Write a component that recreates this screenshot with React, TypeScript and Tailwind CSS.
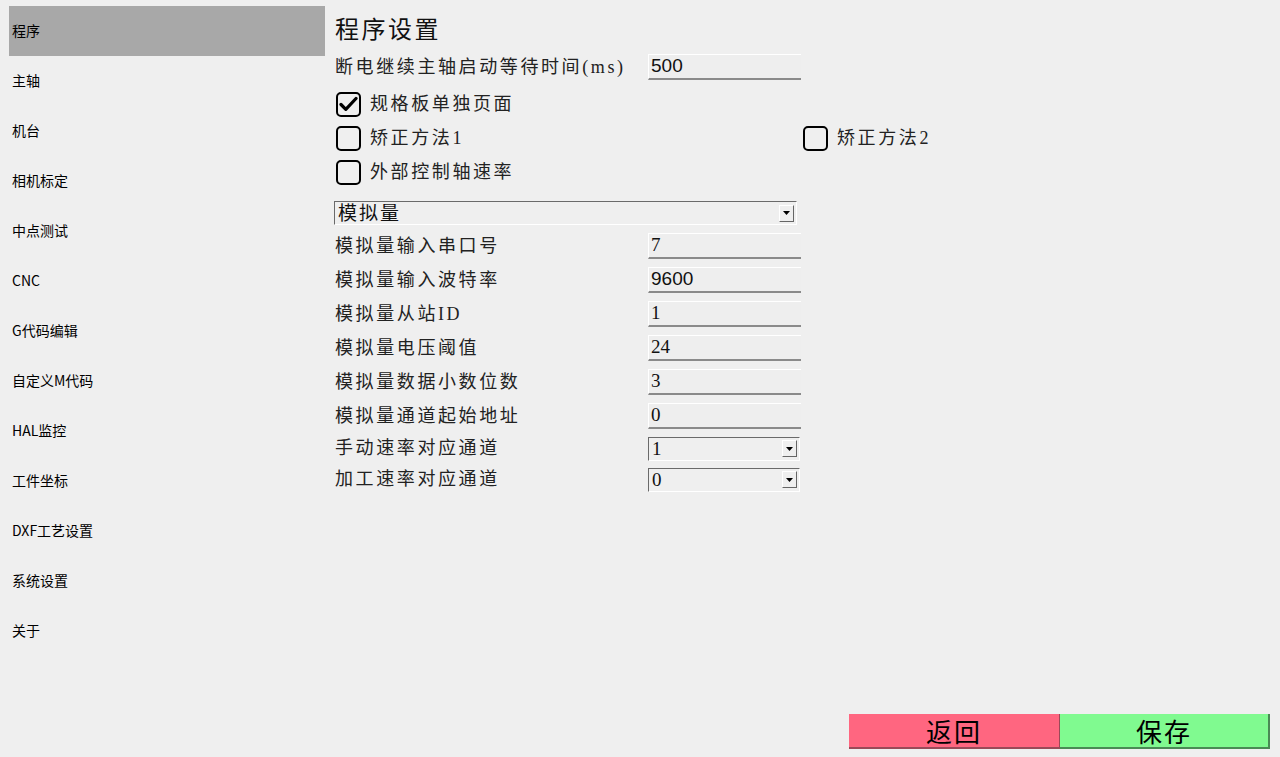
import React from 'react';

const NAV = [
  '程序',
  '主轴',
  '机台',
  '相机标定',
  '中点测试',
  'CNC',
  'G代码编辑',
  '自定义M代码',
  'HAL监控',
  '工件坐标',
  'DXF工艺设置',
  '系统设置',
  '关于',
];

const FIELDS: { label: string; value: string; sans?: boolean }[] = [
  { label: '模拟量输入串口号', value: '7' },
  { label: '模拟量输入波特率', value: '9600', sans: true },
  { label: '模拟量从站ID', value: '1' },
  { label: '模拟量电压阈值', value: '24' },
  { label: '模拟量数据小数位数', value: '3' },
  { label: '模拟量通道起始地址', value: '0' },
];

const serif = "font-['Liberation_Serif','Noto_Sans_CJK_SC',serif]";

function TextBox({ value, sans }: { value: string; sans?: boolean }) {
  return (
    <div
      className={`flex h-[26px] w-[153px] items-center border-t border-l border-t-white border-l-white border-b-2 border-b-[#8a8a8a] bg-[#eeeeee] pl-[2px] text-[19px] text-[#111] ${sans ? "font-['Liberation_Sans',sans-serif]" : ''}`}
    >
      {value}
    </div>
  );
}

function Arrow() {
  return (
    <div className="flex h-[17px] w-[15px] items-center justify-center border border-t-white border-l-white border-b-[#666] border-r-[#666] bg-[#efefef]">
      <svg width="7" height="4" viewBox="0 0 7 4">
        <path d="M0 0h7L3.5 4z" fill="#000" />
      </svg>
    </div>
  );
}

function Combo({ value, width }: { value: string; width: string }) {
  return (
    <div
      className={`flex h-[24px] ${width} items-center justify-between border border-t-[#6a6a6a] border-l-[#6a6a6a] border-b-white border-r-white bg-[#efefef] pl-[3px] pr-[2px] text-[19px] tracking-[2px] text-[#111]`}
    >
      <span className="leading-none">{value}</span>
      <Arrow />
    </div>
  );
}

function Check({ checked, label }: { checked?: boolean; label: string }) {
  return (
    <div className="flex items-center gap-[9px]">
      <div className="flex h-[25px] w-[25px] items-center justify-center rounded-[5px] border-2 border-black bg-[#efefef]">
        {checked && (
          <svg width="19" height="16" viewBox="0 0 19 16">
            <path d="M2 8.5l4.8 4.8L17 2.5" fill="none" stroke="#000" strokeWidth="3.2" strokeLinecap="round" strokeLinejoin="round" />
          </svg>
        )}
      </div>
      <span className="text-[18px] tracking-[2.6px] text-[#222]">{label}</span>
    </div>
  );
}

export default function App() {
  return (
    <div className="flex h-[757px] w-[1280px] overflow-hidden bg-[#efefef]">
      {/* Side nav */}
      <div className="ml-[9px] mt-[6px] w-[316px] font-['Noto_Sans_CJK_SC',sans-serif]">
        {NAV.map((item, i) => (
          <div
            key={item}
            className={`flex h-[50px] items-center pl-[3px] pb-[1px] text-[14px] text-black ${i === 0 ? 'bg-[#a8a8a8]' : ''}`}
          >
            {item}
          </div>
        ))}
      </div>

      {/* Main */}
      <div className={`ml-[10px] mt-[8px] flex flex-1 flex-col pr-[10px] ${serif}`}>
        <div className="flex h-[42px] items-center pt-[2px] text-[24px] tracking-[2.5px] text-[#111]">程序设置</div>

        <div className="flex h-[34px] items-center">
          <span className="w-[313px] text-[18px] tracking-[2.6px] text-[#222]">断电继续主轴启动等待时间(ms)</span>
          <TextBox value="500" sans />
        </div>

        <div className="mt-[3px] flex h-[34px] items-center pl-[1px]">
          <Check checked label="规格板单独页面" />
        </div>
        <div className="flex h-[34px] items-center pl-[1px]">
          <div className="w-[467px]">
            <Check label="矫正方法1" />
          </div>
          <Check label="矫正方法2" />
        </div>
        <div className="flex h-[34px] items-center pl-[1px]">
          <Check label="外部控制轴速率" />
        </div>

        <div className="mt-[12px] -ml-[1px] mb-[4px]">
          <Combo value="模拟量" width="w-[463px]" />
        </div>

        {FIELDS.map((f) => (
          <div key={f.label} className="flex h-[34px] items-center">
            <span className="w-[313px] text-[18px] tracking-[2.6px] text-[#222]">{f.label}</span>
            <TextBox value={f.value} sans={f.sans} />
          </div>
        ))}

        <div className="flex h-[31px] items-center">
          <span className="w-[313px] text-[18px] tracking-[2.6px] text-[#222]">手动速率对应通道</span>
          <Combo value="1" width="w-[152px]" />
        </div>
        <div className="flex h-[31px] items-center">
          <span className="w-[313px] text-[18px] tracking-[2.6px] text-[#222]">加工速率对应通道</span>
          <Combo value="0" width="w-[152px]" />
        </div>

        <div className="mt-auto mb-[8px] flex self-end font-['Noto_Sans_CJK_SC',sans-serif]">
          <button className="flex h-[35px] w-[211px] items-center justify-center border-r border-b-2 border-r-[#9a4a58] border-b-[#9a4a58] bg-[#ff6680] text-[26px] tracking-[2px] text-black">
            返回
          </button>
          <button className="flex h-[35px] w-[210px] items-center justify-center border-r-2 border-b-2 border-r-[#4a8a55] border-b-[#4a8a55] bg-[#80fa90] text-[26px] tracking-[2px] text-black">
            保存
          </button>
        </div>
      </div>
    </div>
  );
}
